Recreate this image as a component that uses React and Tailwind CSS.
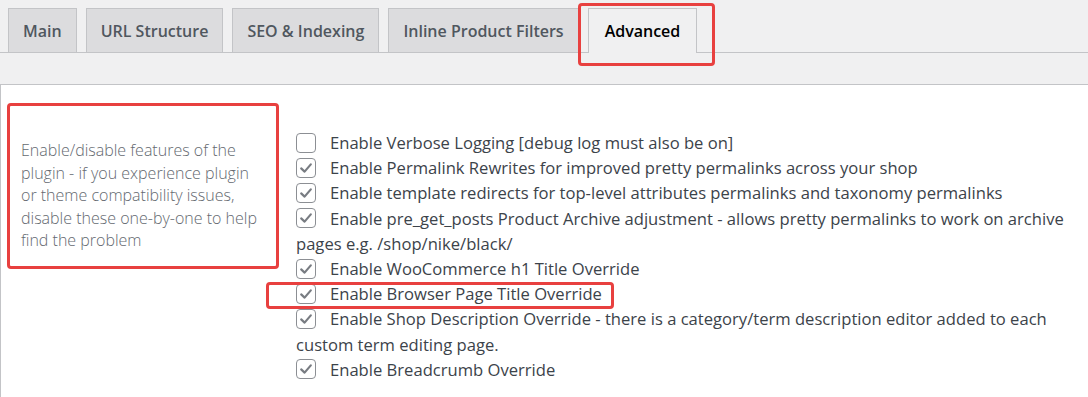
import React from "react";

const tabs = ["Main", "URL Structure", "SEO & Indexing", "Inline Product Filters", "Advanced"];

function Box({ checked }) {
  return (
    <span className="inline-flex align-middle items-center justify-center w-[20px] h-[20px] border border-[#8c8f94] rounded-[4px] bg-white mr-[14px] relative -top-[2px]">
      {checked && (
        <svg width="16" height="16" viewBox="0 0 16 16">
          <path d="M3.2 8.4 L6.6 11.6 L12.8 4.4" fill="none" stroke="#787c82" strokeWidth="2.2" strokeLinecap="round" strokeLinejoin="round" />
        </svg>
      )}
    </span>
  );
}

const items = [
  [false, "Enable Verbose Logging [debug log must also be on]"],
  [true, "Enable Permalink Rewrites for improved pretty permalinks across your shop"],
  [true, "Enable template redirects for top-level attributes permalinks and taxonomy permalinks"],
  [true, "Enable pre_get_posts Product Archive adjustment - allows pretty permalinks to work on archive pages e.g. /shop/nike/black/"],
  [true, "Enable WooCommerce h1 Title Override"],
  [true, "Enable Browser Page Title Override"],
  [true, "Enable Shop Description Override - there is a category/term description editor added to each custom term editing page."],
  [true, "Enable Breadcrumb Override"],
];

export default function App() {
  return (
    <div className="w-[1088px] h-[397px] bg-[#f0f0f1] relative overflow-hidden font-['Open_Sans',sans-serif]">
      <div className="flex items-end pl-[8px] pt-[8px] gap-[9px] border-b border-[#c3c4c7] h-[53px]">
        {tabs.map((t, i) => {
          const active = i === tabs.length - 1;
          return (
            <div
              key={t}
              className={
                "h-[44px] px-[14px] flex items-center border border-b-0 border-[#c3c4c7] text-[16px] font-semibold " +
                (active
                  ? "bg-[#f0f0f1] text-[#000] -mb-px h-[45px] pb-px px-[16px]"
                  : "bg-[#dcdcde] text-[#50575e]")
              }
            >
              {t}
            </div>
          );
        })}
      </div>
      <div className="h-[31px]" />
      <div className="bg-white border-t border-l border-[#c3c4c7] h-[320px] flex">
        <div className="w-[295px] shrink-0 pl-[20px] pt-[54px]">
          <div className="w-[246px] text-[16px] leading-[22.6px] text-[#646970] font-light">
            Enable/disable features of the plugin - if you experience plugin or theme compatibility issues, disable these one-by-one to help find the problem
          </div>
        </div>
        <div className="w-[775px] pt-[45px] text-[16.6px] leading-[25.2px] text-[#3c434a]">
          {items.map(([c, t], i) => (
            <div key={i}>
              <Box checked={c} />
              {t}
            </div>
          ))}
        </div>
      </div>
      <div className="absolute left-[578px] top-[3px] w-[137px] h-[63px] border-[3px] border-[#e8403f] rounded-[4px]" />
      <div className="absolute left-[7px] top-[103px] w-[272px] h-[166px] border-[3px] border-[#e8403f] rounded-[4px]" />
      <div className="absolute left-[266px] top-[282px] w-[348px] h-[27px] border-[3px] border-[#e8403f] rounded-[4px]" />
    </div>
  );
}
